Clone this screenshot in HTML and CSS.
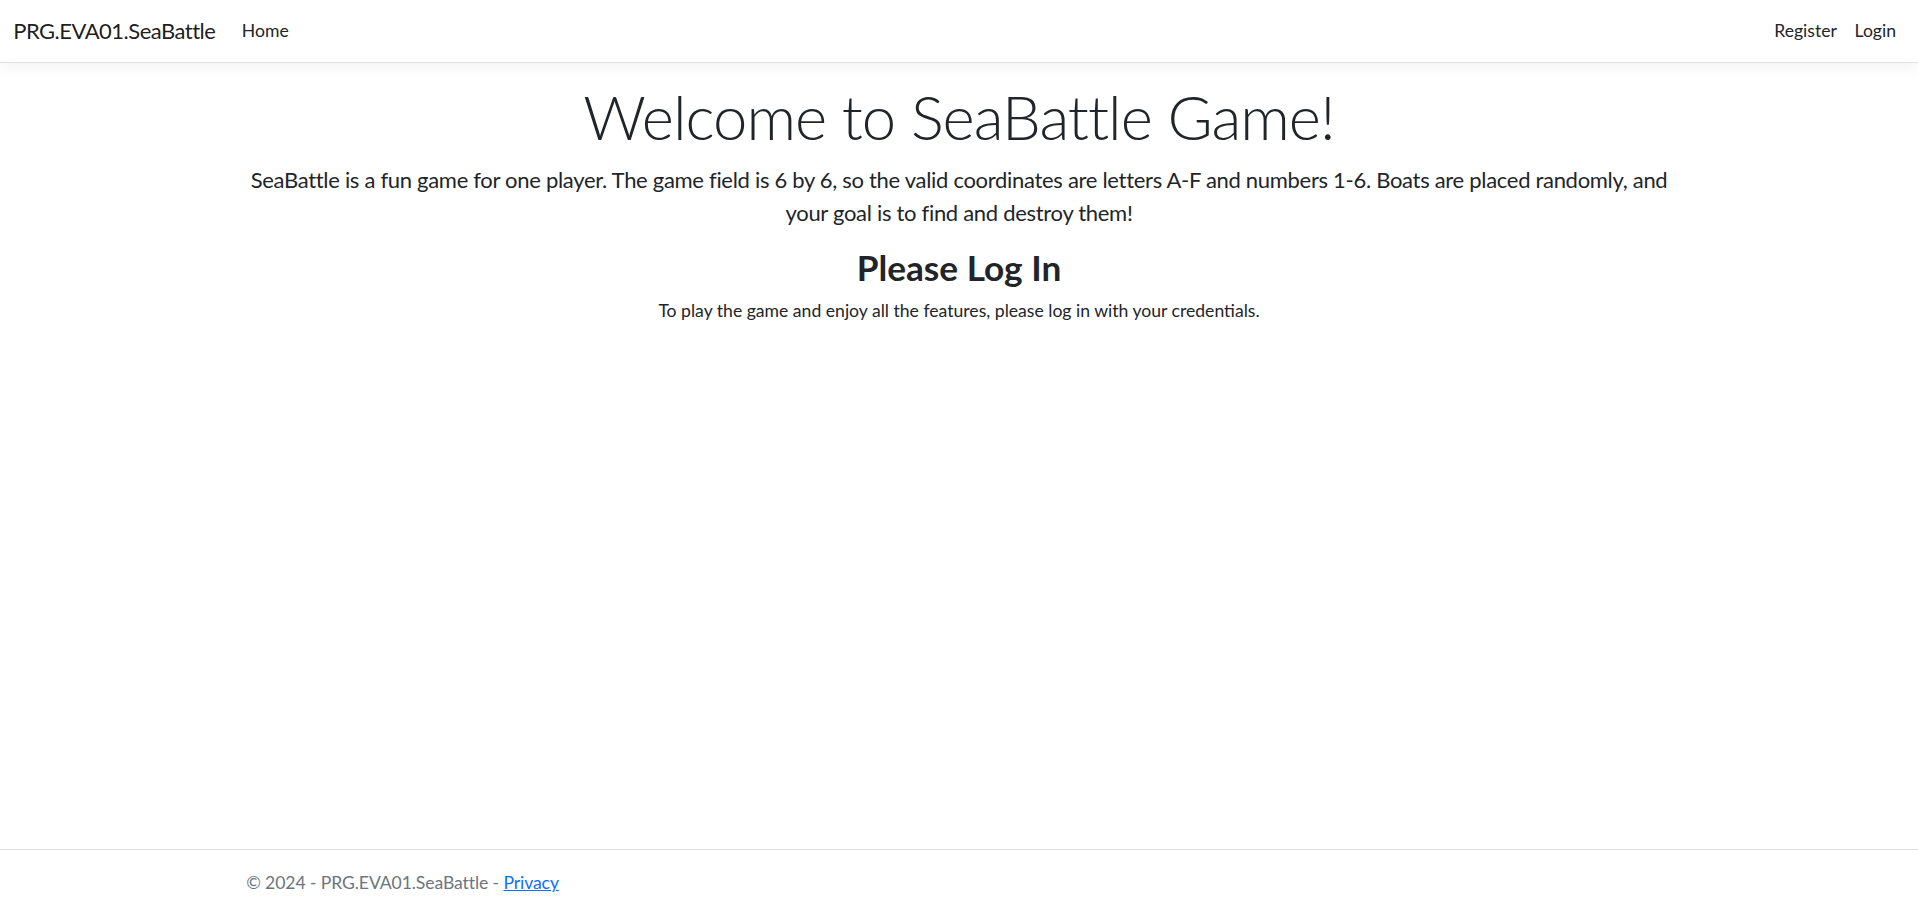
FILE: index.html
```html
<!DOCTYPE html>
<html lang="en">
<head>
<meta charset="utf-8" />
<meta name="viewport" content="width=device-width, initial-scale=1.0" />
<title>Home Page - PRG.EVA01.SeaBattle</title>
<link rel="stylesheet" href="styles.css">
</head>
<body>
  <header>
    <nav class="navbar">
      <div class="navbar-inner">
        <a class="navbar-brand" href="#">PRG.EVA01.SeaBattle</a>
        <ul class="navbar-nav grow">
          <li><a class="nav-link" href="#">Home</a></li>
        </ul>
        <ul class="navbar-nav">
          <li><a class="nav-link" href="#">Register</a></li>
          <li><a class="nav-link" href="#">Login</a></li>
        </ul>
      </div>
    </nav>
  </header>

  <div class="container main">
    <main class="text-center">
      <h1 class="display-4">Welcome to SeaBattle Game!</h1>
      <p class="lead">SeaBattle is a fun game for one player. The game field is 6 by 6, so the valid coordinates are letters A-F and numbers 1-6. Boats are placed randomly, and your goal is to find and destroy them!</p>
      <h2>Please Log In</h2>
      <p>To play the game and enjoy all the features, please log in with your credentials.</p>
    </main>
  </div>

  <footer class="footer">
    <div class="container">
      &copy; 2024 - PRG.EVA01.SeaBattle - <a href="#">Privacy</a>
    </div>
  </footer>
</body>
</html>
```

FILE: styles.css
```css
:root {
  --text-color: #212529;
  --muted: #6c757d;
  --link: #0d6efd;
  --border: #dee2e6;
  --font-family: "Lato", "Open Sans", sans-serif;
}
* {
  box-sizing: border-box;
}
html, body {
  margin: 0;
}
body {
  font-family: var(--font-family);
  font-size: 17.6px;
  line-height: 1.5;
  color: var(--text-color);
  background: #fff;
  display: flex;
  flex-direction: column;
  min-height: 100vh;
}
a {
  color: var(--link);
}

/* top bar */
.navbar {
  background: #fff;
  border-bottom: 1.1px solid var(--border);
  box-shadow: 0 4.4px 13.2px rgba(0,0,0,0.05);
  margin-bottom: 17.6px;
}
.navbar-inner {
  display: flex;
  align-items: center;
  padding: 8.8px 13.2px;
}
.navbar-brand {
  font-size: 22px;
  line-height: 33px;
  letter-spacing: -0.5px;
  padding: 5.5px 0;
  margin-right: 17.6px;
  color: rgba(0,0,0,0.9);
  text-decoration: none;
  white-space: nowrap;
}
.navbar-nav {
  display: flex;
  list-style: none;
  margin: 0;
  padding: 0;
}
.navbar-nav.grow {
  flex-grow: 1;
}
.nav-link {
  display: block;
  padding: 8.8px;
  line-height: 26.4px;
  color: var(--text-color);
  text-decoration: none;
}

/* page body */
.container {
  width: 100%;
  max-width: 1452px;
  margin: 0 auto;
  padding: 0 13.2px;
}
.main {
  flex: 1;
  padding-bottom: 17.6px;
}
.text-center {
  text-align: center;
}
.display-4 {
  font-size: 61.6px;
  font-weight: 300;
  line-height: 1.2;
  letter-spacing: -1px;
  margin: 0 0 8.8px;
}
.lead {
  font-size: 22px;
  letter-spacing: -0.3px;
  margin: 0 0 17.6px;
}
h2 {
  font-size: 35.2px;
  font-weight: 700;
  line-height: 1.2;
  margin: 0 0 8.8px;
}
p {
  margin: 0 0 17.6px;
}

/* bottom bar */
.footer {
  border-top: 1.1px solid var(--border);
  color: var(--muted);
  line-height: 66px;
  letter-spacing: -0.1px;
  white-space: nowrap;
}
```
